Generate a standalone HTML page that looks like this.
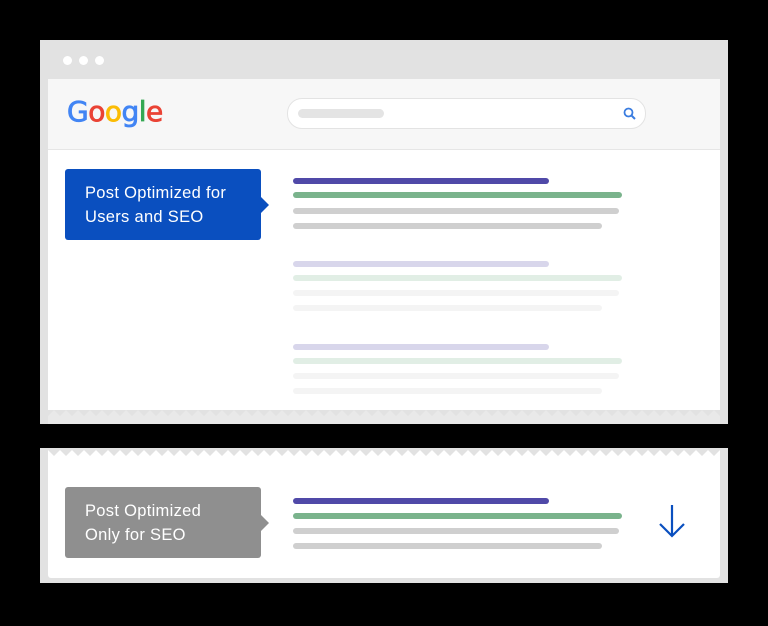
<!DOCTYPE html>
<html><head><style>
body{margin:0;width:768px;height:626px;background:#000;position:relative;overflow:hidden;font-family:"Liberation Sans",sans-serif}
.a{position:absolute}
.l{position:absolute;height:6px;border-radius:3px}
.p{background:#5049a8}.g{background:#7ab38c}.r{background:#cfcfcf}
.call{position:absolute;left:65px;width:196px;height:71px;border-radius:3px;color:#fff;font-size:16.5px;line-height:24px;letter-spacing:.3px;box-sizing:border-box;padding:12px 0 0 20px}
.call:after{content:"";position:absolute;right:-8px;top:28px;border-left:8px solid;border-left-color:inherit;border-top:8px solid transparent;border-bottom:8px solid transparent}
</style></head><body>
<div class="a" style="left:40px;top:40px;width:688px;height:376px;background:#e2e2e2"></div>
<div class="a" style="left:63px;top:56px;width:9px;height:9px;border-radius:50%;background:#fff"></div>
<div class="a" style="left:79px;top:56px;width:9px;height:9px;border-radius:50%;background:#fff"></div>
<div class="a" style="left:95px;top:56px;width:9px;height:9px;border-radius:50%;background:#fff"></div>
<div class="a" style="left:48px;top:79px;width:672px;height:70px;background:#f7f7f7;border-bottom:1px solid #e6e6e6"></div>
<div class="a" style="left:48px;top:150px;width:672px;height:262px;background:#fff"></div>
<svg class="a" style="left:40px;top:400px" width="688" height="24"><polygon fill="#e2e2e2" points="0,6 0,24 688,24 688,6" /><polygon fill="#fff" points="8,0 680,0 680,10 8,10"/></svg>
<svg class="a" style="left:40px;top:406px" width="688" height="18" id="z1"></svg>
<div class="a" style="left:67px;top:95px;font-size:28px;letter-spacing:-.5px;font-family:'DejaVu Sans',sans-serif;-webkit-text-stroke:0.8px"><span style="color:#4285f4;-webkit-text-stroke-color:#4285f4">G</span><span style="color:#ea4335;-webkit-text-stroke-color:#ea4335">o</span><span style="color:#fbbc05;-webkit-text-stroke-color:#fbbc05">o</span><span style="color:#4285f4;-webkit-text-stroke-color:#4285f4">g</span><span style="color:#34a853;-webkit-text-stroke-color:#34a853">l</span><span style="color:#ea4335;-webkit-text-stroke-color:#ea4335">e</span></div>
<div class="a" style="left:287px;top:98px;width:357px;height:29px;border-radius:15px;background:#fff;border:1px solid #e3e3e3"></div>
<div class="a" style="left:298px;top:109px;width:86px;height:9px;border-radius:5px;background:#e4e4e4"></div>
<svg class="a" style="left:623px;top:107px" width="14" height="14"><circle cx="5.5" cy="5.5" r="4" fill="none" stroke="#3b7de0" stroke-width="1.8"/><line x1="8.5" y1="8.5" x2="12" y2="12" stroke="#3b7de0" stroke-width="2"/></svg>
<div class="call" style="top:169px;background:#0a4fbf;border-left-color:#0a4fbf">Post Optimized for<br>Users and SEO</div>
<div class="l p" style="left:293px;top:178px;width:256px"></div>
<div class="l g" style="left:293px;top:192px;width:329px"></div>
<div class="l r" style="left:293px;top:208px;width:326px"></div>
<div class="l r" style="left:293px;top:223px;width:309px"></div>
<div style="opacity:.22">
<div class="l p" style="left:293px;top:261px;width:256px"></div>
<div class="l g" style="left:293px;top:275px;width:329px"></div>
<div class="l r" style="left:293px;top:290px;width:326px"></div>
<div class="l r" style="left:293px;top:305px;width:309px"></div>
<div class="l p" style="left:293px;top:344px;width:256px"></div>
<div class="l g" style="left:293px;top:358px;width:329px"></div>
<div class="l r" style="left:293px;top:373px;width:326px"></div>
<div class="l r" style="left:293px;top:388px;width:309px"></div>
</div>
<div class="a" style="left:40px;top:450px;width:688px;height:133px;background:#e2e2e2"></div>
<div class="a" style="left:48px;top:458px;width:672px;height:120px;background:#fff;border-radius:3px"></div>
<div class="call" style="top:487px;background:#8f8f8f;border-left-color:#8f8f8f">Post Optimized<br>Only for SEO</div>
<div class="l p" style="left:293px;top:498px;width:256px"></div>
<div class="l g" style="left:293px;top:513px;width:329px"></div>
<div class="l r" style="left:293px;top:528px;width:326px"></div>
<div class="l r" style="left:293px;top:543px;width:309px"></div>
<svg class="a" style="left:655px;top:503px" width="34" height="36"><path d="M17 2V33M5 21L17 33L29 21" fill="none" stroke="#0a4fbf" stroke-width="2.2"/></svg>
<script>
(function(){var s='',t='';for(var x=8;x<680;x+=12){s+=(x)+',10 '+(x+6)+',4 ';t+=(x)+',2 '+(x+6)+',8 ';}
document.getElementById('z1').innerHTML='<polygon fill="#e9e9e9" points="8,18 '+s+'680,10 680,18"/>';
var b=document.createElementNS('http://www.w3.org/2000/svg','svg');b.setAttribute('width','688');b.setAttribute('height','14');b.setAttribute('class','a');b.style.left='40px';b.style.top='448px';
b.innerHTML='<polygon fill="#e2e2e2" points="0,0 688,0 688,14 0,14"/><polygon fill="#fff" points="8,14 '+t+'680,2 680,14"/>';document.body.appendChild(b);})();
</script>
</body></html>
